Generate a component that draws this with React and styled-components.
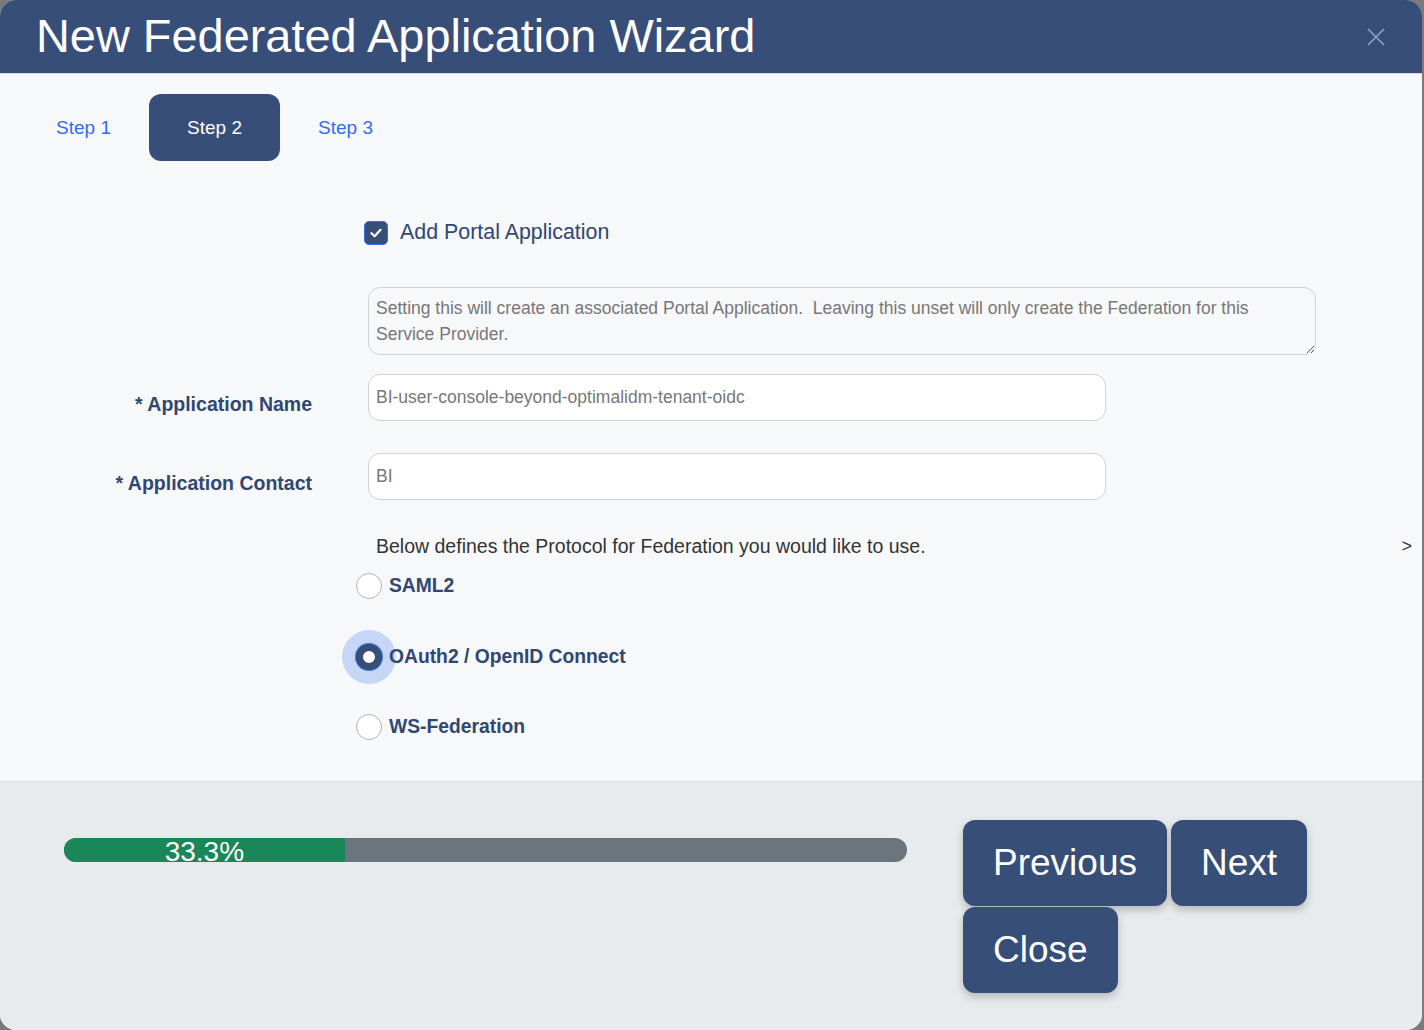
import React from 'react';
import styled, {createGlobalStyle, css} from 'styled-components';

const GlobalStyle = createGlobalStyle`
    html, body {
        margin: 0;
        padding: 0;
        background: #7a7a7a;
        font-family: "Liberation Sans", Arial, sans-serif;
    }
    * {
        box-sizing: border-box;
    }
`;

const NAVY = '#374e79';
const LABEL = '#30476f';

const steps = ['Step 1', 'Step 2', 'Step 3'];
const protocols = [
    {id: 'saml2', label: 'SAML2'},
    {id: 'oidc', label: 'OAuth2 / OpenID Connect', checked: true},
    {id: 'wsfed', label: 'WS-Federation'},
];

const CloseIcon = () => (
    <svg width="18" height="18" viewBox="0 0 18 18">
        <path d="M1 1L17 17M17 1L1 17" stroke="#93a2bd" strokeWidth="1.6" fill="none"/>
    </svg>
);

const CheckIcon = () => (
    <svg width="12" height="10" viewBox="0 0 12 10">
        <path d="M1.5 5.2L4.6 8.2L10.5 1.8" stroke="#fff" strokeWidth="2.2" fill="none" strokeLinecap="round" strokeLinejoin="round"/>
    </svg>
);

const App = () => {
    const progress = 33.3;
    return (
        <React.Fragment>
            <GlobalStyle/>
            <Modal>
                <Header>
                    <Title>New Federated Application Wizard</Title>
                    <CloseButton aria-label="close"><CloseIcon/></CloseButton>
                </Header>
                <Body>
                    <Tabs>
                        {steps.map((s, i) => <Tab key={s} active={i === 1}>{s}</Tab>)}
                    </Tabs>
                    <Form>
                        <Row top={59}>
                            <LabelCell/>
                            <Field>
                                <CheckRow>
                                    <CheckBox><CheckIcon/></CheckBox>
                                    <CheckLabel>Add Portal Application</CheckLabel>
                                </CheckRow>
                            </Field>
                        </Row>
                        <Row top={42}>
                            <LabelCell/>
                            <Field>
                                <Note readOnly rows={2}
                                      value={'Setting this will create an associated Portal Application.  Leaving this unset will only create the Federation for this Service Provider.'}/>
                            </Field>
                        </Row>
                        <Row top={19}>
                            <LabelCell><Label>* Application Name</Label></LabelCell>
                            <Field><Input readOnly value="BI-user-console-beyond-optimalidm-tenant-oidc"/></Field>
                        </Row>
                        <Row top={32}>
                            <LabelCell><Label>* Application Contact</Label></LabelCell>
                            <Field><Input readOnly value="BI"/></Field>
                        </Row>
                        <Row top={34}>
                            <LabelCell/>
                            <Field grow>
                                <Hint>Below defines the Protocol for Federation you would like to use.</Hint>
                                <More>&gt;</More>
                            </Field>
                        </Row>
                        <Radios>
                            {protocols.map(p => (
                                <RadioRow key={p.id}>
                                    <Radio checked={!!p.checked}/>
                                    <RadioLabel>{p.label}</RadioLabel>
                                </RadioRow>
                            ))}
                        </Radios>
                    </Form>
                </Body>
                <Footer>
                    <ProgressTrack>
                        <ProgressFill style={{width: `${progress}%`}}>
                            <ProgressText>{progress}%</ProgressText>
                        </ProgressFill>
                    </ProgressTrack>
                    <Buttons>
                        <Button>Previous</Button>
                        <Button>Next</Button>
                        <Button>Close</Button>
                    </Buttons>
                </Footer>
            </Modal>
        </React.Fragment>
    )
};

const Modal = styled.div`
    width: 1422px;
    height: 1030px;
    border-radius: 16px;
    overflow: hidden;
    display: flex;
    flex-direction: column;
    background: #f7f8fa;
`;

const Header = styled.div`
    height: 74px;
    flex: none;
    background: ${NAVY};
    border-bottom: 1px solid #d5dae2;
    display: flex;
    align-items: center;
    justify-content: space-between;
    padding: 0 37px 0 36px;
`;

const Title = styled.h1`
    margin: 0;
    color: #fff;
    font-weight: 400;
    font-size: 46.9px;
    line-height: 1;
`;

const CloseButton = styled.button`
    border: 0;
    background: none;
    padding: 0;
    display: flex;
`;

const Body = styled.div`
    flex: 1;
    background: #f7f8fa;
`;

const Tabs = styled.div`
    display: flex;
    padding: 20px 0 0 18px;
`;

const Tab = styled.div`
    width: 131px;
    height: 67px;
    display: flex;
    align-items: center;
    justify-content: center;
    border-radius: 12px;
    font-size: 19px;
    color: #2f6df5;
    ${p => p.active && css`
        background: ${NAVY};
        color: #fff;
    `}
`;

const Form = styled.div`
    display: flex;
    flex-direction: column;
`;

const Row = styled.div`
    display: flex;
    align-items: center;
    margin-top: ${p => p.top || 0}px;
`;

const LabelCell = styled.div`
    width: 312px;
    flex: none;
    text-align: right;
    margin-right: 56px;
    padding-top: 14px;
`;

const Label = styled.label`
    color: ${LABEL};
    font-weight: 700;
    font-size: 19.5px;
`;

const Field = styled.div`
    display: flex;
    align-items: center;
    ${p => p.grow && css`
        flex: 1;
        justify-content: space-between;
        padding-right: 10px;
    `}
`;

const CheckRow = styled.div`
    display: flex;
    align-items: center;
    gap: 12px;
    margin-left: -4px;
`;

const CheckBox = styled.span`
    width: 24px;
    height: 24px;
    border-radius: 5px;
    background: ${NAVY};
    border: 1px solid #3e6fe0;
    display: flex;
    align-items: center;
    justify-content: center;
`;

const CheckLabel = styled.span`
    color: ${LABEL};
    font-size: 21.4px;
`;

const Note = styled.textarea`
    width: 948px;
    height: 68px;
    border: 1px solid #cfd2d6;
    border-radius: 12px;
    background: #f7f8fa;
    color: #777;
    font-family: "Liberation Sans", Arial, sans-serif;
    font-size: 17.5px;
    line-height: 26px;
    padding: 7px 7px;
    outline: none;
`;

const Input = styled.input`
    width: 738px;
    height: 47px;
    border: 1px solid #cfd2d6;
    border-radius: 12px;
    background: #fff;
    color: #777;
    font-family: "Liberation Sans", Arial, sans-serif;
    font-size: 17.5px;
    padding: 0 7px;
    outline: none;
`;

const Hint = styled.span`
    margin-left: 8px;
    font-size: 19.5px;
    line-height: 24px;
    color: #333;
`;

const More = styled.span`
    font-size: 18px;
    color: #333;
`;

const Radios = styled.div`
    display: flex;
    flex-direction: column;
    gap: 44.5px;
    padding: 15px 0 0 356px;
`;

const RadioRow = styled.div`
    display: flex;
    align-items: center;
    gap: 7px;
`;

const Radio = styled.span`
    width: 26px;
    height: 26px;
    border-radius: 50%;
    background: #fff;
    border: 1.5px solid #b4b4b4;
    flex: none;
    ${p => p.checked && css`
        border: 7px solid ${NAVY};
        box-shadow: 0 0 0 1px #3f70e2, 0 0 0 14px #c6d6f6;
    `}
`;

const RadioLabel = styled.span`
    color: ${LABEL};
    font-weight: 700;
    font-size: 19.3px;
    position: relative;
`;

const Footer = styled.div`
    height: 249px;
    flex: none;
    background: #e8ebee;
    border-top: 1px solid #dcdfe3;
    display: flex;
    align-items: flex-start;
    padding: 38px 0 0 64px;
`;

const ProgressTrack = styled.div`
    width: 843px;
    height: 24px;
    margin-top: 18px;
    border-radius: 12px;
    background: #6c757d;
    display: flex;
    flex: none;
`;

const ProgressFill = styled.div`
    background: #1a8759;
    border-radius: 12px 0 0 12px;
    height: 24px;
    display: flex;
    justify-content: center;
`;

const ProgressText = styled.span`
    color: #fff;
    font-size: 28px;
    line-height: 24px;
    white-space: nowrap;
    position: relative;
    top: 2px;
`;

const Buttons = styled.div`
    display: flex;
    flex-wrap: wrap;
    gap: 1px 4px;
    margin-left: 56px;
    width: 350px;
`;

const Button = styled.button`
    border: 0;
    border-radius: 12px;
    background: ${NAVY};
    color: #fff;
    font-family: "Liberation Sans", Arial, sans-serif;
    font-size: 37px;
    height: 86px;
    padding: 0 30px;
    box-shadow: 0 4px 8px rgba(0, 0, 0, 0.22);
`;

export default App;
